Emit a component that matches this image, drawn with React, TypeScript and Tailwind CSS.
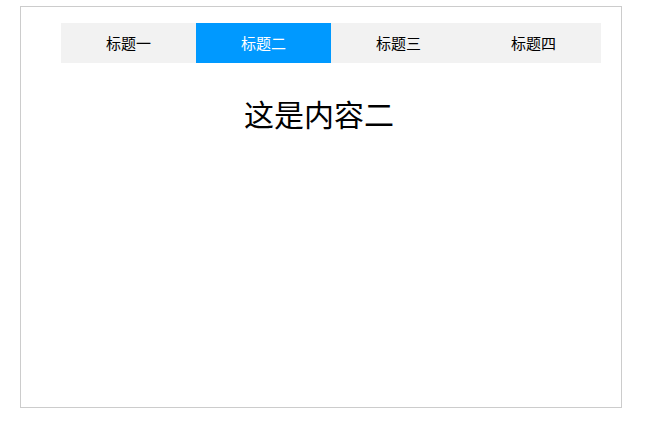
import React, { useState } from 'react';

const tabs = ['标题一', '标题二', '标题三', '标题四'];
const contents = ['这是内容一', '这是内容二', '这是内容三', '这是内容四'];

const App = () => {
  const [active, setActive] = useState(1);
  return (
    <div className="w-[661px] h-[425px] bg-white pt-[6px] pl-[20px] font-['Microsoft_YaHei','Noto_Sans_CJK_SC',sans-serif]">
      <div className="w-[602px] h-[402px] border border-[#cccccc]">
        <ul className="flex w-[540px] h-[40px] ml-[40px] mt-[16px] bg-[#f2f2f2]">
          {tabs.map((t, i) => (
            <li
              key={t}
              onClick={() => setActive(i)}
              className={`w-[135px] h-full flex items-center justify-center text-[15px] cursor-pointer ${
                i === active ? 'bg-[#0099ff] text-white' : 'text-black'
              }`}
            >
              {t}
            </li>
          ))}
        </ul>
        <div className="mt-[30px] pr-[4px] text-center text-[30px] leading-[40px] text-black">{contents[active]}</div>
      </div>
    </div>
  );
};

export default App;
